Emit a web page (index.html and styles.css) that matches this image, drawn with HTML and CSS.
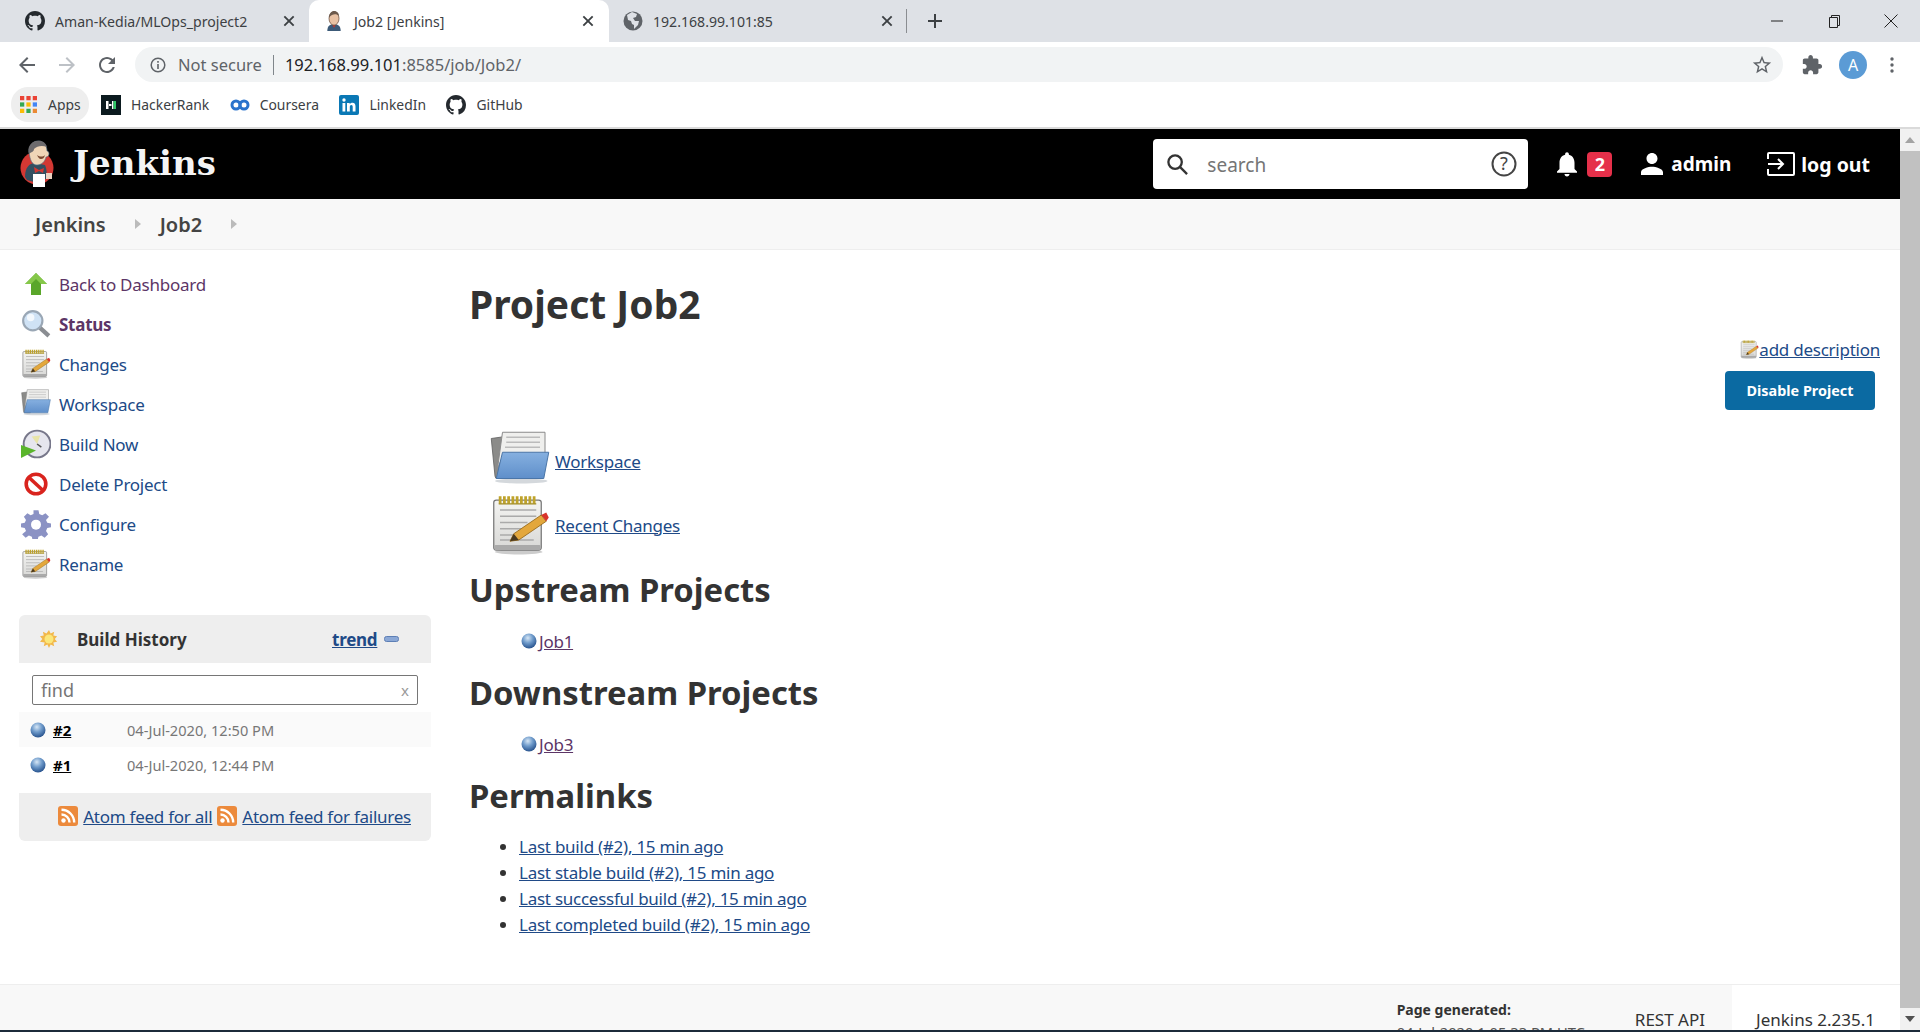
FILE: index.html
```html
<!DOCTYPE html>
<html lang="en">
<head>
    <meta charset="UTF-8">
    <title>Job2 [Jenkins]</title>
    <link rel="stylesheet" href="styles.css">
</head>
<body>
    <svg class="defs" width="0" height="0">
        <defs>
            <linearGradient id="pad-body" x1="0" y1="0" x2="0" y2="1">
                <stop offset="0" stop-color="#f4f4f2"/>
                <stop offset="1" stop-color="#d8d8d6"/>
            </linearGradient>
            <linearGradient id="folder-front" x1="0" y1="0" x2="0" y2="1">
                <stop offset="0" stop-color="#86b0e0"/>
                <stop offset="1" stop-color="#5f8fca"/>
            </linearGradient>
            <radialGradient id="ball" cx=".42" cy=".3" r=".75">
                <stop offset="0" stop-color="#d6e6f5"/>
                <stop offset=".45" stop-color="#6f9bcb"/>
                <stop offset="1" stop-color="#1f4a86"/>
            </radialGradient>
            <symbol id="i-github" viewBox="0 0 16 16">
                <path d="M8 0C3.58 0 0 3.58 0 8c0 3.54 2.29 6.53 5.47 7.59.4.07.55-.17.55-.38 0-.19-.01-.82-.01-1.49-2.01.37-2.53-.49-2.69-.94-.09-.23-.48-.94-.82-1.13-.28-.15-.68-.52-.01-.53.63-.01 1.08.58 1.23.82.72 1.21 1.87.87 2.33.66.07-.52.28-.87.51-1.07-1.78-.2-3.64-.89-3.64-3.95 0-.87.31-1.59.82-2.15-.08-.2-.36-1.02.08-2.12 0 0 .67-.21 2.2.82.64-.18 1.32-.27 2-.27.68 0 1.36.09 2 .27 1.53-1.04 2.2-.82 2.2-.82.44 1.1.16 1.92.08 2.12.51.56.82 1.27.82 2.15 0 3.07-1.87 3.75-3.65 3.95.29.25.54.73.54 1.48 0 1.07-.01 1.93-.01 2.2 0 .21.15.46.55.38A8.013 8.013 0 0016 8c0-4.42-3.58-8-8-8z"/>
            </symbol>
            <symbol id="i-close" viewBox="0 0 12 12">
                <path d="M2 2l8 8M10 2l-8 8" stroke="#3c4043" stroke-width="1.6" fill="none"/>
            </symbol>
            <symbol id="i-notepad" viewBox="0 0 48 48">
                <ellipse cx="23" cy="45.500" rx="19" ry="2" fill="#ccc"/>
                <rect x="3" y="4" width="38" height="40" rx="2" fill="url(#pad-body)" stroke="#777" stroke-width="1"/>
                <rect x="3.500" y="40" width="37" height="4" rx="1" fill="#aaa"/>
                <path d="M7 4h30" stroke="#bfa32a" stroke-width="6" stroke-dasharray="2.200 1.200"/>
                <path d="M7 7h30" stroke="#a08a20" stroke-width="1"/>
                <path d="M8 12h29M8 17h29M8 22h22M8 27h17M8 32h13M8 36h27" stroke="#aaa" stroke-width="1.100"/>
                <path d="M16 37l3-6 22-15 4 5-22 15z" fill="#e3a73c" stroke="#96691a" stroke-width=".7"/>
                <path d="M41 16l4 5 2-3-2-4z" fill="#d8332b"/>
                <path d="M16 37l3-6 4 5z" fill="#4a3a20"/>
            </symbol>
            <symbol id="i-folder" viewBox="0 0 48 48">
                <ellipse cx="25" cy="40" rx="21" ry="2" fill="#d4d8dc"/>
                <path d="M1 6l14-2v34H6a2 2 0 0 1-2-2z" fill="#8b8b89" stroke="#666" stroke-width=".7"/>
                <path d="M6 30L10 1h34v22H9z" fill="#efefed" stroke="#8a8a8a" stroke-width=".8"/>
                <path d="M13 5h27M13 9h27M12 13h28" stroke="#bbb" stroke-width="1.100"/>
                <path d="M10 17h37l-4 21H5z" fill="url(#folder-front)" stroke="#4b76a8" stroke-width=".8"/>
            </symbol>
            <symbol id="i-ball" viewBox="0 0 16 16">
                <circle cx="8" cy="8" r="7.500" fill="url(#ball)"/>
            </symbol>
            <symbol id="i-rss" viewBox="0 0 20 20">
                <rect width="20" height="20" rx="3" fill="#ec8a3c"/>
                <circle cx="5.500" cy="14.500" r="2.200" fill="#fff"/>
                <path d="M3.500 8.500a8 8 0 0 1 8 8M3.500 3.800a12.700 12.700 0 0 1 12.700 12.700" stroke="#fff" stroke-width="2.400" fill="none"/>
            </symbol>
        </defs>
    </svg>

    <header class="chrome">
        <div class="tabstrip">
            <div class="tab tab-first">
                <svg class="favicon" fill="#24292e"><use href="#i-github"/></svg>
                <span class="tab-title">Aman-Kedia/MLOps_project2</span>
                <svg class="tab-close"><use href="#i-close"/></svg>
            </div>
            <div class="tab tab-active">
                <svg class="favicon" viewBox="0 0 20 24">
                    <path d="M2 24c0-6 3-8 8-8s8 2 8 8z" fill="#3c5a78"/>
                    <path d="M8 17l2 3 2-3z" fill="#c8342c"/>
                    <ellipse cx="10" cy="9" rx="6" ry="8" fill="#e9c2a4" stroke="#5b4030" stroke-width=".8"/>
                    <path d="M4 8c0-5 3-8 6-8 4 0 6 3 6 6-3-3-8-3-12 2z" fill="#6d5a4c"/>
                </svg>
                <span class="tab-title">Job2 [Jenkins]</span>
                <svg class="tab-close"><use href="#i-close"/></svg>
            </div>
            <div class="tab tab-last">
                <svg class="favicon" viewBox="0 0 20 20">
                    <circle cx="10" cy="10" r="9.500" fill="#5f6368"/>
                    <path d="M9 1L4 4l1 5 3 1 1 3 2 1v4l4-4 1-4h-4l-2-3 3-1 1-3z" fill="#dee1e6"/>
                </svg>
                <span class="tab-title">192.168.99.101:85</span>
                <svg class="tab-close"><use href="#i-close"/></svg>
            </div>
            <span class="tab-sep"></span>
            <svg class="new-tab" viewBox="0 0 16 16"><path d="M8 1v14M1 8h14" stroke="#3c4043" stroke-width="2"/></svg>
            <div class="win-controls">
                <svg viewBox="0 0 14 14"><path d="M1 7h12" stroke="#222" stroke-width="1"/></svg>
                <svg viewBox="0 0 14 14"><path d="M2.500 3.500h8v10h-8zM4.500 3.500v-2h8v10h-2" stroke="#222" fill="none"/></svg>
                <svg viewBox="0 0 14 14"><path d="M.5.5l13 13M13.500.5l-13 13" stroke="#222" fill="none"/></svg>
            </div>
        </div>

        <div class="toolbar">
            <svg class="tool-icon" viewBox="0 0 24 24" fill="#5f6368"><path d="M20 11H7.830l5.590-5.590L12 4l-8 8 8 8 1.410-1.410L7.830 13H20v-2z"/></svg>
            <svg class="tool-icon" viewBox="0 0 24 24" fill="#bdc1c6"><path d="M4 11h12.170l-5.590-5.590L12 4l8 8-8 8-1.410-1.410L16.170 13H4v-2z"/></svg>
            <svg class="tool-icon" viewBox="0 0 24 24" fill="#5f6368"><path d="M17.650 6.350C16.200 4.900 14.210 4 12 4c-4.420 0-7.990 3.580-7.990 8s3.570 8 7.990 8c3.730 0 6.840-2.550 7.730-6h-2.080c-.82 2.330-3.040 4-5.650 4-3.310 0-6-2.690-6-6s2.690-6 6-6c1.660 0 3.140.69 4.220 1.780L13 11h7V4l-2.350 2.350z"/></svg>
            <div class="omnibox">
                <svg class="info-icon" viewBox="0 0 16 16"><circle cx="8" cy="8" r="6.800" fill="none" stroke="#5f6368" stroke-width="1.500"/><path d="M8 7v5M8 4v1.800" stroke="#5f6368" stroke-width="1.600"/></svg>
                <span class="not-secure">Not secure</span>
                <span class="omni-sep"></span>
                <span class="url">192.168.99.101<span class="url-path">:8585/job/Job2/</span></span>
                <svg class="star" viewBox="0 0 24 24" fill="#5f6368"><path d="M22 9.240l-7.190-.62L12 2 9.190 8.630 2 9.240l5.460 4.730L5.820 21 12 17.270 18.180 21l-1.630-7.030L22 9.240zM12 15.400l-3.760 2.270 1-4.280-3.320-2.880 4.380-.38L12 6.100l1.710 4.040 4.380.38-3.320 2.880 1 4.280L12 15.400z"/></svg>
            </div>
            <svg class="puzzle" viewBox="0 0 24 24" fill="#5f6368"><path d="M20.500 11H19V7c0-1.100-.9-2-2-2h-4V3.500C13 2.120 11.880 1 10.500 1S8 2.120 8 3.500V5H4c-1.100 0-1.990.9-1.990 2v3.800H3.500c1.490 0 2.700 1.210 2.700 2.700s-1.210 2.700-2.700 2.700H2V20c0 1.100.9 2 2 2h3.800v-1.500c0-1.490 1.210-2.700 2.700-2.700 1.490 0 2.700 1.210 2.700 2.700V22H17c1.100 0 2-.9 2-2v-4h1.500c1.380 0 2.500-1.120 2.500-2.500S21.880 11 20.500 11z"/></svg>
            <span class="avatar">A</span>
            <svg class="dots" viewBox="0 0 4 16" fill="#5f6368"><circle cx="2" cy="2" r="1.700"/><circle cx="2" cy="8" r="1.700"/><circle cx="2" cy="14" r="1.700"/></svg>
        </div>

        <div class="bookmarks">
            <div class="bm bm-apps">
                <svg class="bm-icon-apps" viewBox="0 0 16 16">
                    <rect width="4" height="4" fill="#ea4335"/><rect x="6" width="4" height="4" fill="#ea4335"/><rect x="12" width="4" height="4" fill="#ea4335"/>
                    <rect y="6" width="4" height="4" fill="#34a853"/><rect x="6" y="6" width="4" height="4" fill="#fbbc05"/><rect x="12" y="6" width="4" height="4" fill="#4285f4"/>
                    <rect y="12" width="4" height="4" fill="#fbbc05"/><rect x="6" y="12" width="4" height="4" fill="#34a853"/><rect x="12" y="12" width="4" height="4" fill="#ea8a35"/>
                </svg>
                <span>Apps</span>
            </div>
            <div class="bm">
                <svg class="bm-icon" viewBox="0 0 20 20"><rect width="20" height="20" fill="#0b1a1f"/><path d="M5 6v8h2.500V6zM8 9h2.500v2H8zM11 6v8h1.500V6z" fill="#fff"/><rect x="12.500" y="6" width="2.500" height="8" fill="#2ec866"/></svg>
                <span>HackerRank</span>
            </div>
            <div class="bm">
                <svg class="bm-icon" viewBox="0 0 20 20" fill="none" stroke="#2a73cc" stroke-width="3"><circle cx="6" cy="10" r="4"/><circle cx="14" cy="10" r="4"/></svg>
                <span>Coursera</span>
            </div>
            <div class="bm">
                <svg class="bm-icon" viewBox="0 0 20 20"><rect width="20" height="20" rx="2" fill="#0a78b5"/><path d="M3.500 8h2.800v8.500H3.500zM3.300 5a1.700 1.700 0 1 0 3.400 0 1.700 1.700 0 0 0-3.400 0zM8 8h2.700v1.300c.6-1 1.600-1.500 2.800-1.500 2.200 0 3 1.400 3 3.700v5h-2.800V12c0-1.200-.4-1.900-1.400-1.900s-1.500.8-1.500 1.900v4.500H8z" fill="#fff"/></svg>
                <span>LinkedIn</span>
            </div>
            <div class="bm">
                <svg class="bm-icon" fill="#24292e"><use href="#i-github"/></svg>
                <span>GitHub</span>
            </div>
        </div>
    </header>

    <div class="viewport">
        <div class="page">
            <div class="jenkins-head">
                <svg class="logo" viewBox="0 0 34 48">
                    <circle cx="17" cy="28" r="16.500" fill="#d33833"/>
                    <path d="M5 37c0-9 4-14 10-14l10 2c2 4 2 9 1 14l-12 3-7-2z" fill="#335061"/>
                    <path d="M14 27l5 3 5-2-1 5-4-2-4 2z" fill="#d33833"/>
                    <path d="M9 12C9 5 13 1 18 1s9 4 9 10c1 0 2 1 2 3s-2 3-3 3c-1 5-5 8-9 8-5 0-7-5-8-13z" fill="#f0d6b7" stroke="#49728b" stroke-width=".6"/>
                    <path d="M9 14C7 8 10 2 17 1c5-1 9 2 10 6-5-2-10-1-13 2 0 3-3 3-5 5z" fill="#6d6b6d"/>
                    <path d="M17 15c3 2 6 2 8 0-1 3-2 4-4 4s-3-2-4-4z" fill="#7a4a32"/>
                    <path d="M13 34h12v13H13z" fill="#fff"/>
                    <path d="M26 33h6v6h-6z" fill="#ecd1c0"/>
                </svg>
                <span class="brand">Jenkins</span>
                <div class="head-right">
                    <div class="search-box">
                        <svg class="search-icon" viewBox="0 0 24 24" fill="none" stroke="#333" stroke-width="2.400"><circle cx="9.500" cy="9.500" r="7"/><path d="M14.500 14.500L22 22"/></svg>
                        <span class="search-text">search</span>
                        <svg class="help-icon" viewBox="0 0 26 26"><circle cx="13" cy="13" r="11.500" fill="none" stroke="#444" stroke-width="2"/><text x="13" y="19" text-anchor="middle" class="help-q">?</text></svg>
                    </div>
                    <svg class="bell" viewBox="4 2 16 20" fill="#fff"><path d="M12 22c1.100 0 2-.9 2-2h-4c0 1.100.9 2 2 2zm6-6v-5c0-3.070-1.640-5.640-4.500-6.320V4c0-.83-.67-1.500-1.500-1.500s-1.500.67-1.500 1.500v.68C7.630 5.360 6 7.920 6 11v5l-2 2v1h16v-1l-2-2z"/></svg>
                    <span class="badge">2</span>
                    <svg class="person" viewBox="4 4 16 16" fill="#fff"><path d="M12 12c2.210 0 4-1.790 4-4s-1.790-4-4-4-4 1.790-4 4 1.790 4 4 4zm0 2c-2.670 0-8 1.340-8 4v2h16v-2c0-2.660-5.330-4-8-4z"/></svg>
                    <span class="head-link head-admin">admin</span>
                    <svg class="logout" viewBox="0 0 28 24" fill="none" stroke="#fff" stroke-width="2"><path d="M1 7V2a1 1 0 0 1 1-1h24a1 1 0 0 1 1 1v20a1 1 0 0 1-1 1H2a1 1 0 0 1-1-1v-5"/><path d="M1 12h15M11 7l5 5-5 5"/></svg>
                    <span class="head-link head-logout">log out</span>
                </div>
            </div>

            <nav class="breadcrumbs">
                <span class="crumb">Jenkins</span>
                <span class="crumb-arrow"></span>
                <span class="crumb">Job2</span>
                <span class="crumb-arrow"></span>
            </nav>

            <div class="content">
                <aside class="side">
                    <ul class="tasks">
                        <li class="task visited">
                            <svg class="task-icon" viewBox="-3 -3 30 30"><path d="M12 1L1 12h6v11h10V12h6z" fill="#5aa62a"/><path d="M12 1L1 12h6l5-5 5 5h6z" fill="#86c84a"/></svg>
                            Back to Dashboard
                        </li>
                        <li class="task visited task-current">
                            <svg class="task-icon" viewBox="0 0 28 28"><path d="M17 17l9 8" stroke="#8a8d92" stroke-width="4"/><circle cx="11" cy="11" r="9" fill="#cfe2f5" stroke="#9aa7b5" stroke-width="2"/><circle cx="9" cy="8" r="3.500" fill="#f3f8fd"/></svg>
                            Status
                        </li>
                        <li class="task"><svg class="task-icon"><use href="#i-notepad"/></svg>Changes</li>
                        <li class="task"><svg class="task-icon"><use href="#i-folder"/></svg>Workspace</li>
                        <li class="task">
                            <svg class="task-icon" viewBox="0 0 28 28"><circle cx="15" cy="14" r="12.500" fill="#e6e6ee" stroke="#77778a" stroke-width="1.800"/><path d="M15 14l-5-7 8-1z" fill="#e8e4a8"/><path d="M15 14l4 3" stroke="#555" stroke-width="1.400"/><path d="M0 15l14 5-14 7z" fill="#5ab52c"/></svg>
                            Build Now
                        </li>
                        <li class="task">
                            <svg class="task-icon" viewBox="-3 -3 30 30"><circle cx="12" cy="12" r="9.800" fill="#fff" stroke="#d9241e" stroke-width="3.600"/><path d="M5 5.500l14 13" stroke="#d9241e" stroke-width="3.600"/></svg>
                            Delete Project
                        </li>
                        <li class="task">
                            <svg class="task-icon" viewBox="0 0 24 24"><path d="M10 1h4l.6 3 2.400 1 2.600-1.700 2.800 2.800L20 8.700l1 2.300 3 .6v3l-3 .6-1 2.400 1.700 2.500-2.800 2.800-2.600-1.700-2.400 1-.6 3h-4l-.6-3-2.400-1-2.600 1.700-2.800-2.800L4 17.600l-1-2.400-3-.6v-3l3-.6 1-2.300-1.700-2.600 2.800-2.800L7.700 5l2.300-1z" fill="#8b92c4"/><circle cx="12" cy="12.500" r="4" fill="#fff"/></svg>
                            Configure
                        </li>
                        <li class="task"><svg class="task-icon"><use href="#i-notepad"/></svg>Rename</li>
                    </ul>

                    <section class="history">
                        <div class="history-head">
                            <svg class="sun" viewBox="0 0 20 20"><path d="M10 0l1.800 4 4-2-1 4.200L19 7l-2.600 3 2.600 3-4.200.8 1 4.200-4-2-1.800 4-1.800-4-4 2 1-4.200L0 13l2.600-3L0 7l4.200-.8-1-4.200 4 2z" fill="#f2b84a"/><circle cx="10" cy="10" r="5" fill="#fbe77a"/></svg>
                            <span class="history-title">Build History</span>
                            <span class="trend">trend</span>
                            <svg class="minus" viewBox="0 0 15 6"><rect x=".5" y=".5" width="14" height="5" rx="2" fill="#8ba8d6" stroke="#5d7fb5"/></svg>
                        </div>
                        <div class="find-wrap">
                            <div class="find">
                                <span>find</span>
                                <span class="find-x">x</span>
                            </div>
                        </div>
                        <div class="build build-alt">
                            <svg class="ball"><use href="#i-ball"/></svg>
                            <span class="build-num">#2</span>
                            <span class="build-date">04-Jul-2020, 12:50 PM</span>
                        </div>
                        <div class="build">
                            <svg class="ball"><use href="#i-ball"/></svg>
                            <span class="build-num">#1</span>
                            <span class="build-date">04-Jul-2020, 12:44 PM</span>
                        </div>
                        <div class="history-foot">
                            <svg class="rss"><use href="#i-rss"/></svg><a class="link">Atom feed for all</a>
                            <svg class="rss"><use href="#i-rss"/></svg><a class="link">Atom feed for failures</a>
                        </div>
                    </section>
                </aside>

                <main class="main">
                    <div class="project-actions">
                        <div class="add-desc">
                            <svg class="add-icon"><use href="#i-notepad"/></svg><a class="link">add description</a>
                        </div>
                        <span class="disable-btn">Disable Project</span>
                    </div>

                    <h1 class="page-title">Project Job2</h1>

                    <div class="big-links">
                        <div class="big-link">
                            <svg class="big-icon"><use href="#i-folder"/></svg><a class="link">Workspace</a>
                        </div>
                        <div class="big-link">
                            <svg class="big-icon"><use href="#i-notepad"/></svg><a class="link">Recent Changes</a>
                        </div>
                    </div>

                    <h2 class="section-title">Upstream Projects</h2>
                    <div class="relation"><svg class="ball"><use href="#i-ball"/></svg><a class="link visited-link">Job1</a></div>

                    <h2 class="section-title">Downstream Projects</h2>
                    <div class="relation"><svg class="ball"><use href="#i-ball"/></svg><a class="link visited-link">Job3</a></div>

                    <h2 class="section-title">Permalinks</h2>
                    <ul class="permalinks">
                        <li><a class="link">Last build (#2), 15 min ago</a></li>
                        <li><a class="link">Last stable build (#2), 15 min ago</a></li>
                        <li><a class="link">Last successful build (#2), 15 min ago</a></li>
                        <li><a class="link">Last completed build (#2), 15 min ago</a></li>
                    </ul>
                </main>
            </div>

            <footer class="page-foot">
                <div class="generated">
                    <strong>Page generated:</strong>
                    <span>04-Jul-2020 1:05:33 PM UTC</span>
                </div>
                <span class="rest-api">REST API</span>
                <span class="version">Jenkins 2.235.1</span>
            </footer>
        </div>

        <div class="scrollbar">
            <span class="arrow-up"></span>
            <span class="thumb"></span>
            <span class="arrow-down"></span>
        </div>
    </div>
    <div class="taskbar-edge"></div>
</body>
</html>
```

FILE: styles.css
```css
:root {
    --text-color: #333;
    --link-color: #204a87;
    --visited-color: #5c3566;
    --panel-color: #eee;
}

* {
    margin: 0;
    padding: 0;
    box-sizing: border-box;
}

html, body {
    height: 100%;
    overflow: hidden;
}

body {
    display: flex;
    flex-direction: column;
    font-family: "Noto Sans", sans-serif;
    color: var(--text-color);
    background: white;
}

.defs {
    position: absolute;
}

/* browser chrome */
.chrome {
    flex: none;
    height: 129px;
    background: white;
    border-bottom: 2px solid #dadada;
}

.tabstrip {
    display: flex;
    align-items: center;
    height: 42px;
    background: #dee1e6;
}

.tab {
    display: flex;
    align-items: center;
    height: 42px;
    font-size: 14.1px;
    color: #3c4043;
}

.tab-first {
    width: 309px;
    padding: 0 13px 0 25px;
}

.tab-active {
    width: 300px;
    padding: 0 14px 0 15px;
    background: white;
    border-radius: 10px 10px 0 0;
}

.tab-last {
    width: 297px;
    padding: 0 12px 0 14px;
}

.favicon {
    flex: none;
    width: 20px;
    height: 20px;
}

.tab-title {
    flex: 1;
    margin-left: 10px;
    white-space: nowrap;
}

.tab-close {
    flex: none;
    width: 14px;
    height: 14px;
}

.tab-sep {
    width: 1px;
    height: 24px;
    background: #8a8d91;
}

.new-tab {
    width: 16px;
    height: 16px;
    margin-left: 20px;
}

.win-controls {
    display: flex;
    gap: 43px;
    margin-left: auto;
    padding-right: 22px;
}

.win-controls svg {
    width: 14px;
    height: 14px;
}

.toolbar {
    display: flex;
    align-items: center;
    height: 45px;
    padding-left: 15px;
}

.tool-icon {
    flex: none;
    width: 24px;
    height: 24px;
    margin-right: 16px;
}

.omnibox {
    display: flex;
    align-items: center;
    flex: none;
    width: 1648px;
    height: 35px;
    padding-left: 15px;
    background: #f1f3f4;
    border-radius: 18px;
    font-size: 16.5px;
}

.info-icon {
    width: 16px;
    height: 16px;
    margin-right: 12px;
}

.not-secure {
    color: #5f6368;
}

.omni-sep {
    width: 1px;
    height: 20px;
    margin: 0 11px;
    background: #80868b;
}

.url {
    color: #202124;
}

.url-path {
    color: #5f6368;
}

.star {
    width: 22px;
    height: 22px;
    margin-left: auto;
    margin-right: 10px;
}

.puzzle {
    width: 22px;
    height: 22px;
    margin-left: 18px;
}

.avatar {
    width: 28px;
    height: 28px;
    margin-left: 16px;
    border-radius: 50%;
    background: #5b9bd5;
    color: white;
    font-size: 16px;
    line-height: 28px;
    text-align: center;
}

.dots {
    width: 4px;
    height: 16px;
    margin-left: 23px;
}

.bookmarks {
    display: flex;
    align-items: center;
    height: 35px;
    padding-left: 11px;
    font-size: 13.9px;
    color: #3c4043;
}

.bm {
    display: flex;
    align-items: center;
    gap: 10px;
    margin-right: 20.5px;
}

.bm-apps {
    height: 35px;
    width: 78px;
    gap: 11px;
    margin-right: 12px;
    padding-left: 9px;
    background: #eee;
    border-radius: 17px;
}

.bm-icon-apps {
    width: 17px;
    height: 17px;
}

.bm-icon {
    width: 20px;
    height: 20px;
}

.viewport {
    flex: 1;
    display: flex;
    min-height: 0;
}

.page {
    flex: 1;
    min-width: 0;
    display: flex;
    flex-direction: column;
    overflow: hidden;
}

/* jenkins header */
.jenkins-head {
    flex: none;
    display: flex;
    align-items: center;
    height: 70px;
    padding-left: 20px;
    background: black;
    color: white;
}

.logo {
    width: 34px;
    height: 48px;
}

.brand {
    margin: -2px 0 0 19px;
    font-family: "DejaVu Serif", serif;
    font-weight: bold;
    font-size: 34px;
    color: #f4f4f4;
}

.head-right {
    display: flex;
    align-items: center;
    margin-left: auto;
    padding-right: 30px;
}

.search-box {
    display: flex;
    align-items: center;
    width: 375px;
    height: 50px;
    padding: 0 11px 0 13px;
    background: white;
    border-radius: 4px;
    margin-right: 29px;
}

.search-icon {
    width: 23px;
    height: 23px;
}

.search-text {
    flex: 1;
    margin: 2px 0 0 18px;
    font-size: 19px;
    color: #757575;
}

.help-icon {
    width: 26px;
    height: 26px;
}

.help-q {
    font-size: 18px;
    fill: #444;
}

.bell {
    width: 20px;
    height: 26px;
}

.badge {
    width: 25px;
    height: 25px;
    margin-left: 10px;
    border-radius: 4px;
    background: #e5304a;
    font-size: 18px;
    font-weight: bold;
    line-height: 25px;
    text-align: center;
}

.person {
    width: 22px;
    height: 22px;
    margin-left: 29px;
}

.head-link {
    margin-left: 8px;
    font-size: 19px;
    font-weight: bold;
}

.head-admin {
    margin-right: 36px;
}

.head-logout {
    margin-left: 6px;
    font-size: 19.5px;
}

.logout {
    width: 28px;
    height: 24px;
}

.breadcrumbs {
    flex: none;
    display: flex;
    align-items: center;
    height: 51px;
    padding-left: 35px;
    background: #f8f8f8;
    border-bottom: 1px solid #eee;
}

.crumb {
    font-size: 20px;
    font-weight: 600;
    color: #444;
}

.crumb-arrow {
    width: 0;
    height: 0;
    margin: 0 19px 0 29px;
    border-left: 6px solid #bbb;
    border-top: 5px solid transparent;
    border-bottom: 5px solid transparent;
}

/* page body */
.content {
    flex: 1;
    display: flex;
    min-height: 0;
}

.side {
    flex: none;
    width: 469px;
    padding: 14px 0 0 19px;
}

.tasks {
    list-style: none;
    margin-bottom: 31px;
}

.task {
    display: flex;
    align-items: center;
    gap: 8px;
    height: 40px;
    padding-left: 2px;
    font-size: 17px;
    letter-spacing: -0.25px;
    color: var(--link-color);
}

.visited {
    color: var(--visited-color);
}

.task-current {
    font-weight: bold;
}

.task-icon {
    flex: none;
    width: 30px;
    height: 30px;
}

.history {
    width: 412px;
    border-radius: 6px;
    overflow: hidden;
    background: #fff;
}

.history-head {
    display: flex;
    align-items: center;
    height: 48px;
    padding-left: 21px;
    background: var(--panel-color);
}

.sun {
    width: 18px;
    height: 18px;
}

.history-title {
    width: 255px;
    margin-left: 19px;
    font-size: 17px;
    font-weight: bold;
}

.trend {
    font-size: 17px;
    letter-spacing: -0.25px;
    font-weight: bold;
    color: var(--link-color);
    text-decoration: underline;
}

.minus {
    width: 15px;
    height: 6px;
    margin-left: 7px;
}

.find-wrap {
    padding: 12px 13px 7px;
}

.find {
    display: flex;
    justify-content: space-between;
    height: 30px;
    padding: 0 8px;
    border: 1px solid #767676;
    border-radius: 2px;
    font-size: 18px;
    line-height: 28px;
    color: #757575;
}

.find-x {
    font-size: 15px;
    color: #999;
}

.build {
    display: flex;
    align-items: center;
    height: 35px;
    padding-left: 11px;
}

.build-alt {
    background: #fafafa;
}

.ball {
    flex: none;
    width: 16px;
    height: 16px;
}

.build-num {
    width: 74px;
    margin-left: 7px;
    font-size: 15px;
    font-weight: bold;
    color: black;
    text-decoration: underline;
}

.build-date {
    font-size: 14.6px;
    color: #777;
}

.history-foot {
    display: flex;
    align-items: center;
    justify-content: flex-end;
    height: 48px;
    margin-top: 11px;
    padding: 0 20px 2px 0;
    background: var(--panel-color);
    font-size: 17px;
    letter-spacing: -0.25px;
}

.rss {
    width: 20px;
    height: 20px;
    margin: 0 5px;
}

.link {
    color: var(--link-color);
    text-decoration: underline;
}

.visited-link {
    color: var(--visited-color);
}

.main {
    flex: 1;
    min-width: 0;
    padding-top: 28px;
    font-size: 17px;
    letter-spacing: -0.25px;
}

.project-actions {
    float: right;
    display: flex;
    flex-direction: column;
    align-items: flex-end;
    margin-top: 60px;
    padding-right: 20px;
}

.add-desc {
    display: flex;
    align-items: center;
}

.add-icon {
    width: 19px;
    height: 19px;
}

.disable-btn {
    width: 150px;
    height: 39px;
    margin-top: 10px;
    margin-right: 5px;
    border-radius: 4px;
    background: #0b6aa2;
    color: white;
    font-size: 14.4px;
    font-weight: bold;
    line-height: 39px;
    letter-spacing: 0;
    text-align: center;
}

.page-title {
    font-size: 39px;
    font-weight: bold;
    line-height: 52px;
    letter-spacing: 0;
    color: #333;
}

.big-links {
    padding: 99px 0 0 21px;
}

.big-link {
    display: flex;
    align-items: center;
    gap: 5px;
    height: 64px;
}

.big-icon {
    width: 60px;
    height: 60px;
}

.section-title {
    margin-top: 10px;
    font-size: 32.8px;
    font-weight: bold;
    line-height: 46px;
    letter-spacing: 0;
    color: #333;
}

.relation {
    display: flex;
    align-items: center;
    gap: 2px;
    height: 38px;
    margin-top: 9px;
    padding-left: 52px;
}

.permalinks {
    margin-top: 15px;
    padding-left: 50px;
    line-height: 26px;
}

.page-foot {
    flex: none;
    display: flex;
    height: 46px;
    background: #f8f8f8;
    border-top: 1px solid #eee;
    overflow: hidden;
}

.generated {
    display: flex;
    flex-direction: column;
    margin-left: auto;
    padding-top: 14px;
    font-size: 14px;
    line-height: 22px;
    color: #555;
}

.generated strong {
    color: #333;
}

.generated span {
    font-size: 14.7px;
}

.rest-api {
    margin-left: 50px;
    padding-top: 23px;
    font-size: 17px;
    line-height: 24px;
}

.version {
    width: 168px;
    margin-left: 27px;
    padding: 23px 0 0 24px;
    background: white;
    font-size: 17px;
    line-height: 24px;
}

.scrollbar {
    flex: none;
    display: flex;
    flex-direction: column;
    align-items: center;
    width: 20px;
    background: #f1f1f1;
}

.arrow-up, .arrow-down {
    flex: none;
    width: 0;
    height: 0;
    margin: 8px 0;
    border-left: 5px solid transparent;
    border-right: 5px solid transparent;
}

.arrow-up {
    border-bottom: 6px solid #a3a3a3;
}

.arrow-down {
    border-top: 6px solid #505050;
}

.thumb {
    flex: 1;
    width: 100%;
    background: #c1c1c1;
}

.taskbar-edge {
    flex: none;
    height: 2px;
    background: #1c2b3a;
}
```
